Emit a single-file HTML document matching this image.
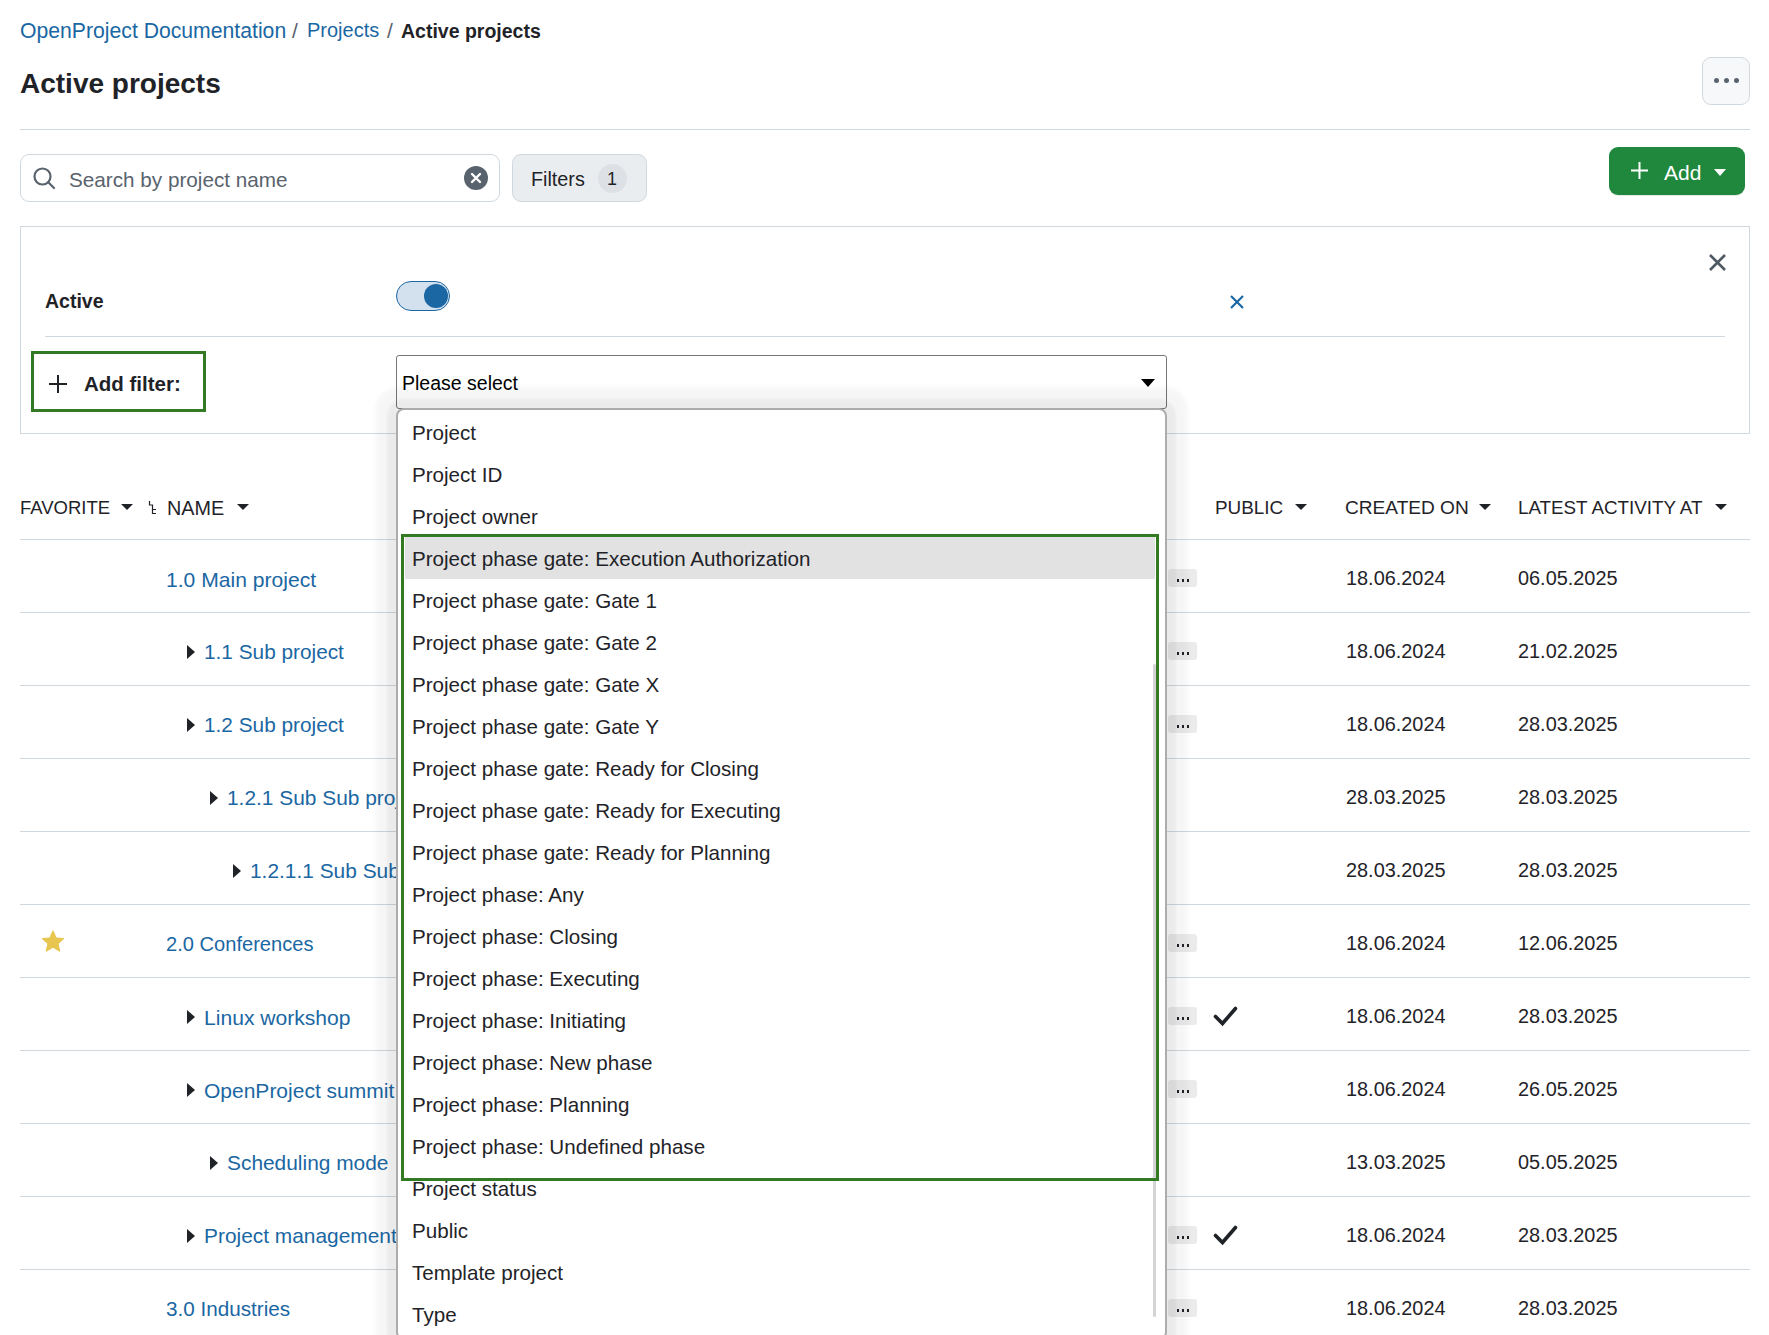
<!DOCTYPE html>
<html><head><meta charset="utf-8">
<style>
*{box-sizing:border-box;margin:0;padding:0}
html,body{width:1769px;height:1335px;overflow:hidden;background:#fff}
body{font-family:"Liberation Sans",sans-serif;color:#1f2328;position:relative}
.a{position:absolute;white-space:nowrap}
.t{position:absolute;white-space:nowrap;line-height:1}
.lnk{color:#1a67a3}
.hl{position:absolute;height:1px;background:#d1d9e0}
.caret{position:absolute;width:0;height:0;border-left:6px solid transparent;border-right:6px solid transparent;border-top:6.5px solid #1f2328}
.arr{position:absolute;width:0;height:0;border-top:7px solid transparent;border-bottom:7px solid transparent;border-left:8px solid #1f2328}
.dots{position:absolute;width:29px;height:18px;background:#ebebeb;border-radius:3px}
.dots i{position:absolute;top:10px;width:2.5px;height:2.5px;background:#1f2328}
.item{position:absolute;left:412px;font-size:20.6px;color:#1f2328;line-height:1}
</style></head><body>

<!-- breadcrumb -->
<div class="t lnk" style="left:20px;top:20px;font-size:21.2px">OpenProject Documentation</div>
<div class="t" style="left:292px;top:20px;font-size:21px;color:#59636e">/</div>
<div class="t lnk" style="left:307px;top:20px;font-size:20px">Projects</div>
<div class="t" style="left:387px;top:20px;font-size:21px;color:#59636e">/</div>
<div class="t" style="left:401px;top:22px;font-size:19.5px;font-weight:bold">Active projects</div>

<!-- heading -->
<div class="t" style="left:20px;top:70px;font-size:28px;font-weight:bold">Active projects</div>

<!-- more button -->
<div class="a" style="left:1702px;top:57px;width:48px;height:48px;border:1px solid #d1d9e0;border-radius:9px;background:#f6f8fa">
  <i style="position:absolute;left:11px;top:20px;width:5px;height:5px;border-radius:50%;background:#59636e"></i>
  <i style="position:absolute;left:21px;top:20px;width:5px;height:5px;border-radius:50%;background:#59636e"></i>
  <i style="position:absolute;left:31px;top:20px;width:5px;height:5px;border-radius:50%;background:#59636e"></i>
</div>

<div class="hl" style="left:20px;top:129px;width:1730px"></div>

<!-- search -->
<div class="a" style="left:20px;top:154px;width:480px;height:48px;border:1px solid #d1d9e0;border-radius:9px;background:#fff"></div>
<svg class="a" style="left:30px;top:164px" width="28" height="28" viewBox="0 0 28 28"><circle cx="12.5" cy="12.5" r="8" fill="none" stroke="#59636e" stroke-width="2.2"/><line x1="18.3" y1="18.3" x2="24" y2="24" stroke="#59636e" stroke-width="2.2" stroke-linecap="round"/></svg>
<div class="t" style="left:69px;top:170px;font-size:20.7px;color:#59636e">Search by project name</div>
<svg class="a" style="left:464px;top:166px" width="24" height="24" viewBox="0 0 24 24"><circle cx="12" cy="12" r="12" fill="#59636e"/><path d="M8 8L16 16M16 8L8 16" stroke="#fff" stroke-width="2.4" stroke-linecap="round"/></svg>

<!-- filters button -->
<div class="a" style="left:512px;top:154px;width:135px;height:48px;border:1px solid #d1d9e0;border-radius:9px;background:#eaedf0"></div>
<div class="t" style="left:531px;top:170px;font-size:19.8px">Filters</div>
<div class="a" style="left:598px;top:164px;width:29px;height:29px;border-radius:50%;background:#dde1e5"></div>
<div class="t" style="left:607px;top:170px;font-size:18px">1</div>

<!-- add button -->
<div class="a" style="left:1609px;top:147px;width:136px;height:48px;border-radius:9px;background:#1f883d;box-shadow:0 1px 0 rgba(31,35,40,.1)"></div>
<svg class="a" style="left:1630px;top:161px" width="19" height="19" viewBox="0 0 19 19"><path d="M9.5 1V18M1 9.5H18" stroke="#fff" stroke-width="2"/></svg>
<div class="t" style="left:1664px;top:162px;font-size:21px;color:#fff">Add</div>
<div class="caret" style="left:1714px;top:169px;border-top-color:#fff;border-left-width:6px;border-right-width:6px;border-top-width:7px"></div>

<!-- filter panel -->
<div class="a" style="left:20px;top:226px;width:1730px;height:208px;border:1px solid #d1d9e0"></div>
<svg class="a" style="left:1708px;top:253px" width="19" height="19" viewBox="0 0 19 19"><path d="M2 2L17 17M17 2L2 17" stroke="#4f5963" stroke-width="2.6"/></svg>
<div class="t" style="left:45px;top:292px;font-size:19.5px;font-weight:bold">Active</div>
<div class="a" style="left:396px;top:281px;width:54px;height:30px;border-radius:15px;background:#d3e1ee;border:1.5px solid #1a67a3"></div>
<div class="a" style="left:424px;top:284px;width:24px;height:24px;border-radius:50%;background:#1a67a3"></div>
<svg class="a" style="left:1229px;top:294px" width="16" height="16" viewBox="0 0 16 16"><path d="M2 2L14 14M14 2L2 14" stroke="#1a67a3" stroke-width="2.2"/></svg>
<div class="hl" style="left:45px;top:336px;width:1680px"></div>

<div class="a" style="left:31px;top:351px;width:175px;height:61px;border:3px solid #347a24"></div>
<svg class="a" style="left:48px;top:374px" width="20" height="20" viewBox="0 0 20 20"><path d="M10 1V19M1 10H19" stroke="#1f2328" stroke-width="2"/></svg>
<div class="t" style="left:84px;top:374px;font-size:20.5px;font-weight:bold">Add filter:</div>

<!-- select -->
<div class="a" style="left:396px;top:355px;width:771px;height:54px;border:1px solid #767676;border-radius:3px;background:#fff"></div>
<div class="t" style="left:402px;top:374px;font-size:19.5px;color:#000">Please select</div>
<div class="a" style="left:1141px;top:379px;width:0;height:0;border-left:7px solid transparent;border-right:7px solid transparent;border-top:8px solid #000"></div>

<!-- table header -->
<div class="t" style="left:20px;top:499px;font-size:18.5px">FAVORITE</div>
<div class="caret" style="left:121px;top:504px"></div>
<svg class="a" style="left:147px;top:500px" width="10" height="15" viewBox="0 0 10 15"><path d="M2.5 1V5H5.5V13.5H9M5.5 9.5H9" fill="none" stroke="#1f2328" stroke-width="1.2"/></svg>
<div class="t" style="left:167px;top:499px;font-size:19.8px">NAME</div>
<div class="caret" style="left:237px;top:504px"></div>
<div class="t" style="left:1215px;top:499px;font-size:18.9px">PUBLIC</div>
<div class="caret" style="left:1295px;top:504px"></div>
<div class="t" style="left:1345px;top:498px;font-size:19.1px">CREATED ON</div>
<div class="caret" style="left:1479px;top:504px"></div>
<div class="t" style="left:1518px;top:499px;font-size:18.8px">LATEST ACTIVITY AT</div>
<div class="caret" style="left:1715px;top:504px"></div>

<div id="rows">
<div class="hl" style="left:20px;top:539px;width:1730px"></div>
<div class="hl" style="left:20px;top:612px;width:1730px"></div>
<div class="t lnk" style="left:166px;top:569px;font-size:21.1px">1.0 Main project</div>
<div class="dots" style="left:1168px;top:569px"><i style="left:8.5px"></i><i style="left:13.5px"></i><i style="left:18.5px"></i></div>
<div class="t" style="left:1346px;top:569px;font-size:19.9px">18.06.2024</div>
<div class="t" style="left:1518px;top:569px;font-size:19.9px">06.05.2025</div>
<div class="hl" style="left:20px;top:685px;width:1730px"></div>
<div class="arr" style="left:187px;top:645px"></div>
<div class="t lnk" style="left:204px;top:642px;font-size:20.8px">1.1 Sub project</div>
<div class="dots" style="left:1168px;top:642px"><i style="left:8.5px"></i><i style="left:13.5px"></i><i style="left:18.5px"></i></div>
<div class="t" style="left:1346px;top:642px;font-size:19.9px">18.06.2024</div>
<div class="t" style="left:1518px;top:642px;font-size:19.9px">21.02.2025</div>
<div class="hl" style="left:20px;top:758px;width:1730px"></div>
<div class="arr" style="left:187px;top:718px"></div>
<div class="t lnk" style="left:204px;top:715px;font-size:20.8px">1.2 Sub project</div>
<div class="dots" style="left:1168px;top:715px"><i style="left:8.5px"></i><i style="left:13.5px"></i><i style="left:18.5px"></i></div>
<div class="t" style="left:1346px;top:715px;font-size:19.9px">18.06.2024</div>
<div class="t" style="left:1518px;top:715px;font-size:19.9px">28.03.2025</div>
<div class="hl" style="left:20px;top:831px;width:1730px"></div>
<div class="arr" style="left:210px;top:791px"></div>
<div class="t lnk" style="left:227px;top:788px;font-size:20.9px">1.2.1 Sub Sub project</div>
<div class="t" style="left:1346px;top:788px;font-size:19.9px">28.03.2025</div>
<div class="t" style="left:1518px;top:788px;font-size:19.9px">28.03.2025</div>
<div class="hl" style="left:20px;top:904px;width:1730px"></div>
<div class="arr" style="left:233px;top:864px"></div>
<div class="t lnk" style="left:250px;top:861px;font-size:20.9px">1.2.1.1 Sub Sub project</div>
<div class="t" style="left:1346px;top:861px;font-size:19.9px">28.03.2025</div>
<div class="t" style="left:1518px;top:861px;font-size:19.9px">28.03.2025</div>
<div class="hl" style="left:20px;top:977px;width:1730px"></div>
<svg class="a" style="left:41px;top:930px" width="24" height="23" viewBox="0 0 24 23"><path d="M12 0.8L15.2 7.9L22.9 8.6L17.1 13.7L18.8 21.3L12 17.3L5.2 21.3L6.9 13.7L1.1 8.6L8.8 7.9Z" fill="#e8c54f" stroke="#e8c54f" stroke-width="1" stroke-linejoin="round"/></svg>
<div class="t lnk" style="left:166px;top:934px;font-size:20.1px">2.0 Conferences</div>
<div class="dots" style="left:1168px;top:934px"><i style="left:8.5px"></i><i style="left:13.5px"></i><i style="left:18.5px"></i></div>
<div class="t" style="left:1346px;top:934px;font-size:19.9px">18.06.2024</div>
<div class="t" style="left:1518px;top:934px;font-size:19.9px">12.06.2025</div>
<div class="hl" style="left:20px;top:1050px;width:1730px"></div>
<div class="arr" style="left:187px;top:1010px"></div>
<div class="t lnk" style="left:204px;top:1007px;font-size:21.1px">Linux workshop</div>
<div class="dots" style="left:1168px;top:1007px"><i style="left:8.5px"></i><i style="left:13.5px"></i><i style="left:18.5px"></i></div>
<svg class="a" style="left:1212px;top:1005px" width="26" height="22" viewBox="0 0 26 22"><path d="M3.5 11.5L10.5 18.5L23.5 3.5" fill="none" stroke="#1f2328" stroke-width="3.6" stroke-linecap="round" stroke-linejoin="miter"/></svg>
<div class="t" style="left:1346px;top:1007px;font-size:19.9px">18.06.2024</div>
<div class="t" style="left:1518px;top:1007px;font-size:19.9px">28.03.2025</div>
<div class="hl" style="left:20px;top:1123px;width:1730px"></div>
<div class="arr" style="left:187px;top:1083px"></div>
<div class="t lnk" style="left:204px;top:1080px;font-size:21.0px">OpenProject summit</div>
<div class="dots" style="left:1168px;top:1080px"><i style="left:8.5px"></i><i style="left:13.5px"></i><i style="left:18.5px"></i></div>
<div class="t" style="left:1346px;top:1080px;font-size:19.9px">18.06.2024</div>
<div class="t" style="left:1518px;top:1080px;font-size:19.9px">26.05.2025</div>
<div class="hl" style="left:20px;top:1196px;width:1730px"></div>
<div class="arr" style="left:210px;top:1156px"></div>
<div class="t lnk" style="left:227px;top:1153px;font-size:20.9px">Scheduling mode</div>
<div class="t" style="left:1346px;top:1153px;font-size:19.9px">13.03.2025</div>
<div class="t" style="left:1518px;top:1153px;font-size:19.9px">05.05.2025</div>
<div class="hl" style="left:20px;top:1269px;width:1730px"></div>
<div class="arr" style="left:187px;top:1229px"></div>
<div class="t lnk" style="left:204px;top:1226px;font-size:20.9px">Project management</div>
<div class="dots" style="left:1168px;top:1226px"><i style="left:8.5px"></i><i style="left:13.5px"></i><i style="left:18.5px"></i></div>
<svg class="a" style="left:1212px;top:1224px" width="26" height="22" viewBox="0 0 26 22"><path d="M3.5 11.5L10.5 18.5L23.5 3.5" fill="none" stroke="#1f2328" stroke-width="3.6" stroke-linecap="round" stroke-linejoin="miter"/></svg>
<div class="t" style="left:1346px;top:1226px;font-size:19.9px">18.06.2024</div>
<div class="t" style="left:1518px;top:1226px;font-size:19.9px">28.03.2025</div>
<div class="hl" style="left:20px;top:1342px;width:1730px"></div>
<div class="t lnk" style="left:166px;top:1299px;font-size:20.7px">3.0 Industries</div>
<div class="dots" style="left:1168px;top:1299px"><i style="left:8.5px"></i><i style="left:13.5px"></i><i style="left:18.5px"></i></div>
<div class="t" style="left:1346px;top:1299px;font-size:19.9px">18.06.2024</div>
<div class="t" style="left:1518px;top:1299px;font-size:19.9px">28.03.2025</div>
</div>
<div id="dd">
<div class="a" style="left:396px;top:408px;width:771px;height:932px;border:2px solid #acacac;border-radius:8px;background:#fff;box-shadow:0 0 3px 9px rgba(0,0,0,.045),0 0 4px 21px rgba(0,0,0,.035)"></div>
<div class="a" style="left:405px;top:537px;width:750px;height:42px;background:#e2e2e2"></div>
<div class="a" style="left:1153px;top:664px;width:3px;height:653px;border-radius:2px;background:#d4d4d4"></div>
<div class="item" style="top:423px">Project</div>
<div class="item" style="top:465px">Project ID</div>
<div class="item" style="top:507px">Project owner</div>
<div class="item" style="top:549px">Project phase gate: Execution Authorization</div>
<div class="item" style="top:591px">Project phase gate: Gate 1</div>
<div class="item" style="top:633px">Project phase gate: Gate 2</div>
<div class="item" style="top:675px">Project phase gate: Gate X</div>
<div class="item" style="top:717px">Project phase gate: Gate Y</div>
<div class="item" style="top:759px">Project phase gate: Ready for Closing</div>
<div class="item" style="top:801px">Project phase gate: Ready for Executing</div>
<div class="item" style="top:843px">Project phase gate: Ready for Planning</div>
<div class="item" style="top:885px">Project phase: Any</div>
<div class="item" style="top:927px">Project phase: Closing</div>
<div class="item" style="top:969px">Project phase: Executing</div>
<div class="item" style="top:1011px">Project phase: Initiating</div>
<div class="item" style="top:1053px">Project phase: New phase</div>
<div class="item" style="top:1095px">Project phase: Planning</div>
<div class="item" style="top:1137px">Project phase: Undefined phase</div>
<div class="item" style="top:1179px">Project status</div>
<div class="item" style="top:1221px">Public</div>
<div class="item" style="top:1263px">Template project</div>
<div class="item" style="top:1305px">Type</div>
<div class="a" style="left:401px;top:534px;width:758px;height:647px;border:3px solid #347a24"></div>
</div>
</body></html>
